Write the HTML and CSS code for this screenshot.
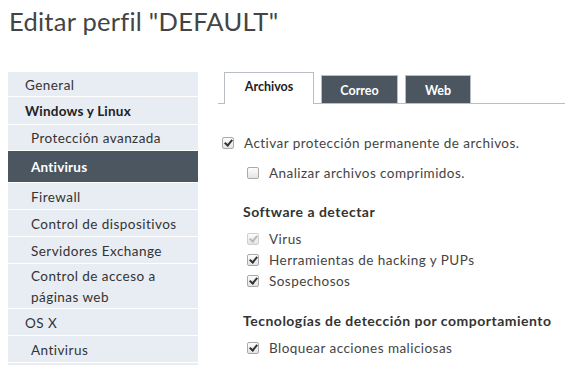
FILE: index.html
```html
<!DOCTYPE html>
<html>
<head>
  <title>Editar perfil</title>
  <link rel="stylesheet" href="styles.css">
</head>
<body>
  <h1 class="title">Editar perfil "DEFAULT"</h1>
  <div class="layout">
    <ul class="menu">
      <li class="item first">General</li>
      <li class="item group">Windows y Linux</li>
      <li class="item sub">Protección avanzada</li>
      <li class="item sub active">Antivirus</li>
      <li class="item sub">Firewall</li>
      <li class="item sub">Control de dispositivos</li>
      <li class="item sub">Servidores Exchange</li>
      <li class="item sub double">Control de acceso a<br>páginas web</li>
      <li class="item">OS X</li>
      <li class="item sub">Antivirus</li>
      <li class="item sub"></li>
    </ul>

    <div class="content">
      <div class="tabs">
        <div class="tab selected">Archivos</div>
        <div class="tab">Correo</div>
        <div class="tab narrow">Web</div>
      </div>

      <div class="panel">
        <label class="check"><span class="box on"></span>Activar protección permanente de archivos.</label>
        <div class="indent">
          <label class="check"><span class="box"></span>Analizar archivos comprimidos.</label>

          <h3 class="section">Software a detectar</h3>
          <label class="check"><span class="box on disabled"></span>Virus</label>
          <label class="check"><span class="box on"></span>Herramientas de hacking y PUPs</label>
          <label class="check"><span class="box on"></span>Sospechosos</label>

          <h3 class="section">Tecnologías de detección por comportamiento</h3>
          <label class="check"><span class="box on"></span>Bloquear acciones maliciosas</label>
        </div>
      </div>
    </div>
  </div>
</body>
</html>
```

FILE: styles.css
```css
body {
  margin: 0;
  font-family: "Lato", "Liberation Sans", sans-serif;
  color: #3d3d3d;
  background: #fff;
  overflow: hidden;
}
.title {
  margin: 0;
  padding: 6px 0 0 9px;
  height: 72px;
  box-sizing: border-box;
  font-size: 25.5px;
  line-height: 30px;
  font-weight: 400;
  color: #444;
  letter-spacing: 0.25px;
}
.layout {
  display: flex;
  gap: 20px;
  padding-left: 8px;
}

/* left menu */
.menu {
  list-style: none;
  margin: 0;
  padding: 0;
  width: 190px;
  flex-shrink: 0;
}
.item {
  display: flex;
  align-items: center;
  box-sizing: border-box;
  height: 26px;
  background: #e8ecf3;
  margin-bottom: 1px;
  padding: 1px 8px 0 17px;
  font-size: 13.5px;
  letter-spacing: 0.45px;
  color: #333;
}
.item.first {
  height: 24px;
}
.item.group {
  height: 27px;
  font-weight: 700;
  color: #222;
  letter-spacing: 0.2px;
}
.item.sub {
  padding-left: 23px;
}
.item.sub:nth-child(3) {
  height: 25px;
}
.item.active {
  height: 31px;
  background: #4b5661;
  color: #fff;
  font-weight: 700;
  letter-spacing: 0.2px;
}
.item.double {
  height: 44px;
  line-height: 21px;
}

/* tabs */
.content {
  flex: 1;
}
.tabs {
  display: flex;
  align-items: flex-end;
  gap: 7px;
  height: 31px;
  border-bottom: 1px solid #b9bec4;
  padding-left: 6px;
}
.tab {
  background: #4b5661;
  color: #fff;
  font-weight: 700;
  font-size: 12.5px;
  height: 28px;
  line-height: 30px;
  box-sizing: border-box;
  border: 1px solid #b9bec4;
  border-bottom: none;
  width: 77px;
  text-align: center;
}
.tab.narrow {
  width: 66px;
}
.tab.selected {
  background: #fff;
  color: #222;
  height: 32px;
  margin-bottom: -1px;
  width: 90px;
  line-height: 28px;
}

/* options */
.panel {
  padding-top: 28px;
  padding-left: 4px;
}
.check {
  display: flex;
  align-items: center;
  font-size: 13.5px;
  letter-spacing: 0.45px;
  line-height: 18px;
  height: 21px;
  color: #444;
}
.panel > .check {
  margin-bottom: 9px;
}
.indent {
  padding-left: 25px;
}
.box {
  width: 10px;
  height: 10px;
  border: 1px solid #a9a9a9;
  border-radius: 2px;
  background: linear-gradient(#fdfdfd, #e4e4e4);
  margin-right: 10px;
  position: relative;
  flex-shrink: 0;
}
.box.on::after {
  content: "";
  position: absolute;
  left: 3px;
  top: 0;
  width: 3px;
  height: 6px;
  border: solid #333;
  border-width: 0 2px 2px 0;
  transform: rotate(40deg);
}
.box.disabled {
  border-color: #d0d0d0;
}
.box.disabled::after {
  border-color: #b8b8b8;
}
.section {
  margin: 18px 0 6px -4px;
  height: 21px;
  line-height: 21px;
  font-size: 14px;
  letter-spacing: 0.5px;
  font-weight: 700;
  color: #333;
}
.check + .section {
  margin-top: 19px;
}
.indent > .check:first-child + .section {
  margin-top: 18px;
}
```
